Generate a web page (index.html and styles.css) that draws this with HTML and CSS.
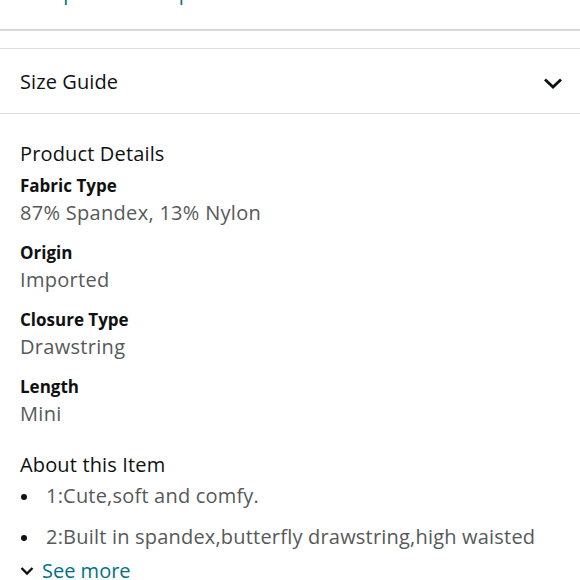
FILE: index.html
```html
<!DOCTYPE html>
<html>
<head>
<meta charset="utf-8">
<link rel="stylesheet" href="styles.css">
</head>
<body>
<div class="topbar"><p class="toplink">Compare similar products</p></div>
<div class="spacer"></div>
<div class="size-row">
  <span class="size-label">Size Guide</span>
  <svg class="chev" width="20" height="13" viewBox="0 0 20 13"><path d="M2 2.5 L10 10 L18 2.5" fill="none" stroke="#0f1111" stroke-width="2.8"/></svg>
</div>
<div class="details">
  <h2 class="heading">Product Details</h2>
  <div class="attr"><div class="attr-name">Fabric Type</div><div class="attr-val">87% Spandex, 13% Nylon</div></div>
  <div class="attr"><div class="attr-name">Origin</div><div class="attr-val">Imported</div></div>
  <div class="attr"><div class="attr-name">Closure Type</div><div class="attr-val">Drawstring</div></div>
  <div class="attr"><div class="attr-name">Length</div><div class="attr-val">Mini</div></div>
  <h2 class="heading about">About this Item</h2>
  <ul class="bullets">
    <li>1:Cute,soft and comfy.</li>
    <li>2:Built in spandex,butterfly drawstring,high waisted</li>
  </ul>
  <div class="seemore">
    <svg width="14" height="10" viewBox="0 0 14 10"><path d="M1.5 2 L7 7.5 L12.5 2" fill="none" stroke="#0f1111" stroke-width="2.4"/></svg>
    <span>See more</span>
  </div>
</div>
</body>
</html>
```
FILE: styles.css
```css
html, body {
  margin: 0;
  padding: 0;
  background: #ffffff;
  font-family: "Open Sans", "Noto Sans", sans-serif;
  color: #0f1111;
  overflow: hidden;
}
.topbar {
  height: 29px;
  overflow: hidden;
  border-bottom: 2px solid #d5d9d9;
}
.toplink {
  margin: -19px 0 0 20px;
  font-size: 20px;
  line-height: 24px;
  color: #007185;
}
.spacer {
  height: 17px;
}
.size-row {
  height: 64px;
  border-top: 1px solid #dedede;
  border-bottom: 1px solid #dedede;
  display: flex;
  align-items: center;
  justify-content: space-between;
  padding: 0 17px 0 20px;
}
.size-label {
  font-size: 20px;
  line-height: 24px;
  letter-spacing: 0.1px;
  margin-top: 1px;
}
.chev {
  margin-top: 5px;
}
.details {
  padding: 27px 20px 0 20px;
}
.heading {
  margin: 0;
  font-weight: 400;
  font-size: 20px;
  line-height: 26px;
  letter-spacing: 0.15px;
}
.attr {
  margin-top: 6px;
}
.attr + .attr {
  margin-top: 13px;
}
.attr-name {
  font-weight: 700;
  font-size: 17px;
  line-height: 25px;
}
.attr-val {
  font-size: 20px;
  line-height: 29px;
  letter-spacing: 0.3px;
  color: #565959;
}
.about {
  margin-top: 24px;
}
.bullets {
  margin: 5px 0 0 0;
  padding: 0;
  list-style: none;
  color: #565959;
  font-size: 20px;
  line-height: 26px;
  letter-spacing: 0.2px;
  white-space: nowrap;
}
.bullets li {
  display: flex;
  align-items: center;
  margin-bottom: 15px;
}
.bullets li::before {
  content: "";
  width: 6px;
  height: 6px;
  border-radius: 50%;
  background: #0f1111;
  margin: 1px 19px 0 1px;
  flex: none;
}
.seemore {
  margin-top: -7px;
  display: flex;
  align-items: center;
  gap: 8px;
  color: #007185;
  font-size: 20px;
  line-height: 26px;
}
```
